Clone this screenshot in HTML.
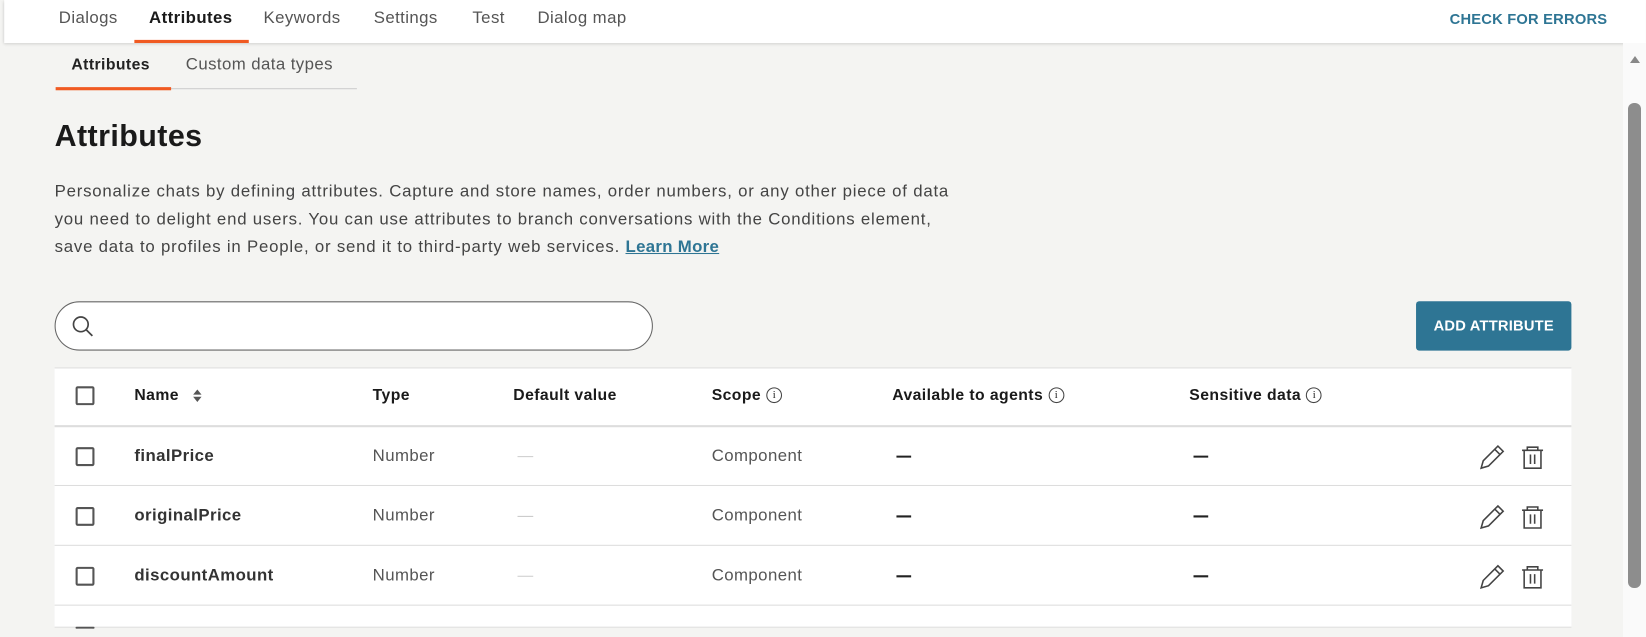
<!DOCTYPE html>
<html><head><style>
*{margin:0;padding:0;box-sizing:border-box}
body{width:1646px;height:637px;overflow:hidden;background:#f4f4f2;font-family:"Liberation Sans",sans-serif;color:#222;position:relative}
#w{position:absolute;left:0;top:0;width:1568px;height:607px;transform:scale(1.0497);transform-origin:0 0;letter-spacing:0.4px}
.a{position:absolute;white-space:nowrap}
.top{position:absolute;left:4px;top:0;width:1564px;height:41px;background:#fff;box-shadow:0 1px 3px rgba(0,0,0,.18)}
.nav{font-size:16px;color:#555;top:9px}
.sb{position:absolute;left:1623px;top:43px;width:23px;height:594px;background:#fafafa}
.cb{position:absolute;left:72px;width:18px;height:18px;border:2px solid #555;border-radius:2px}
.h{font-size:15px;font-weight:bold;color:#1a1a1a}
.c{font-size:16px;color:#555}
.hl{position:absolute;left:52px;width:1445px;height:2px;background:#ddd}
.i{display:inline-block;width:15px;height:15px;border:1.3px solid #444;border-radius:50%;font-size:10px;text-align:center;line-height:13px;font-weight:normal;vertical-align:top;margin-left:5px;margin-top:1px;letter-spacing:0;font-family:"Liberation Serif",serif}
</style></head><body>
<div id="w">
<div class="top"></div>
<div class="a nav" style="left:56px">Dialogs</div>
<div class="a nav" style="left:142px;color:#1a1a1a;font-weight:bold">Attributes</div>
<div class="a" style="left:128px;top:38px;width:109px;height:3px;background:#f05a22"></div>
<div class="a nav" style="left:251px">Keywords</div>
<div class="a nav" style="left:356px">Settings</div>
<div class="a nav" style="left:450px">Test</div>
<div class="a nav" style="left:512px">Dialog map</div>
<div class="a" style="left:1381px;top:10px;font-size:14px;font-weight:bold;color:#2e7594;letter-spacing:0.2px">CHECK FOR ERRORS</div>

<div class="a" style="left:68px;top:53px;font-size:15px;font-weight:bold">Attributes</div>
<div class="a" style="left:177px;top:53px;font-size:16px;color:#555">Custom data types</div>
<div class="a" style="left:162px;top:84px;width:178px;height:1px;background:#ccc"></div>
<div class="a" style="left:53px;top:83px;width:110px;height:3px;background:#f05a22"></div>

<div class="a" style="left:52px;top:114px;font-size:29px;font-weight:bold;color:#1a1a1a">Attributes</div>
<div class="a" style="left:52px;top:170px;font-size:16px;line-height:26.5px;color:#444;letter-spacing:0.75px">Personalize chats by defining attributes. Capture and store names, order numbers, or any other piece of data<br>you need to delight end users. You can use attributes to branch conversations with the Conditions element,<br>save data to profiles in People, or send it to third-party web services. <b style="color:#2e7594;text-decoration:underline;letter-spacing:0.3px">Learn More</b></div>

<div class="a" style="left:52px;top:287px;width:570px;height:47px;border:1px solid #666;border-radius:24px;background:#fff"></div>
<svg class="a" style="left:68px;top:300px" width="22" height="22" viewBox="0 0 22 22" fill="none" stroke="#444" stroke-width="1.6"><circle cx="9" cy="9" r="7"/><path d="M14 14l6 6"/></svg>
<div class="a" style="left:1349px;top:287px;width:148px;height:47px;background:#2e7594;border-radius:3px;color:#fff;font-size:14px;font-weight:bold;text-align:center;line-height:47px;letter-spacing:0.2px">ADD ATTRIBUTE</div>

<div class="a" style="left:52px;top:350px;width:1445px;height:248px;background:#fff;border-top:1px solid #ddd"></div>
<div class="hl" style="top:405px"></div><div class="hl" style="top:462px;height:1px"></div><div class="hl" style="top:519px;height:1px"></div><div class="hl" style="top:576px;height:1px"></div><div class="hl" style="top:597px;height:1px"></div>

<div class="cb" style="top:368px"></div>
<div class="a h" style="left:128px;top:368px">Name</div>
<svg class="a" style="left:182px;top:370px" width="12" height="14"><path d="M2 6L6 1L10 6z M2 8L6 13L10 8z" fill="#555"/></svg>
<div class="a h" style="left:355px;top:368px">Type</div>
<div class="a h" style="left:489px;top:368px">Default value</div>
<div class="a h" style="left:678px;top:368px">Scope<span class="i">i</span></div>
<div class="a h" style="left:850px;top:368px">Available to agents<span class="i">i</span></div>
<div class="a h" style="left:1133px;top:368px">Sensitive data<span class="i">i</span></div>

<div class="cb" style="top:426px"></div>
<div class="a h" style="left:128px;top:426px;font-size:16px;color:#333">finalPrice</div>
<div class="cb" style="top:483px"></div>
<div class="a h" style="left:128px;top:483px;font-size:16px;color:#333">originalPrice</div>
<div class="cb" style="top:540px"></div>
<div class="a h" style="left:128px;top:540px;font-size:16px;color:#333">discountAmount</div>
<div class="cb" style="top:597px;height:1px;border-bottom:none"></div>

<div class="a c" style="left:355px;top:426px">Number</div><div class="a c" style="left:355px;top:483px">Number</div><div class="a c" style="left:355px;top:540px">Number</div>
<div class="a c" style="left:678px;top:426px">Component</div><div class="a c" style="left:678px;top:483px">Component</div><div class="a c" style="left:678px;top:540px">Component</div>

<svg class="a" style="left:0;top:0" width="1568" height="607">
<g stroke="#ccc" stroke-width="1"><path d="M493 435h15M493 492h15M493 549h15"/></g>
<g stroke="#222" stroke-width="2"><path d="M854 435h14M854 492h14M854 549h14M1137 435h14M1137 492h14M1137 549h14"/></g>
<g fill="none" stroke="#444" stroke-width="1.5">
<g id="ic"><path d="M1411 446l2-7 14-14 5 5-14 14z M1424 428l5 5"/><path d="M1450 429h20M1455 429v-3h10v3M1452 429v17h16v-17M1458 433v9M1462 433v9"/></g>
<use href="#ic" y="57"/><use href="#ic" y="114"/>
</g>
</svg>
</div>
<div class="sb"></div>
<div class="a" style="left:1628px;top:103px;width:13px;height:485px;background:#8d8d8d;border-radius:6px"></div>
<div class="a" style="left:1630px;top:56px;width:0;height:0;border-left:5px solid transparent;border-right:5px solid transparent;border-bottom:7px solid #888"></div>
</body></html>
